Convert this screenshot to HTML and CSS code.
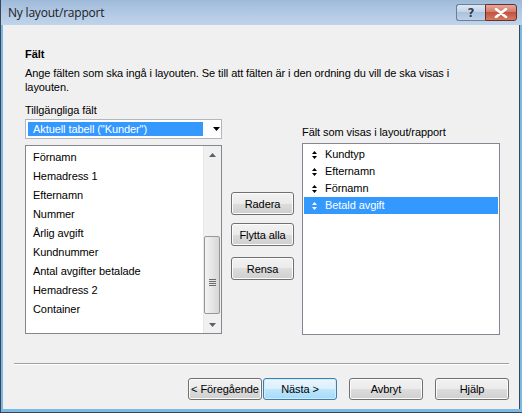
FILE: index.html
```html
<!DOCTYPE html>
<html>
<head>
<meta charset="utf-8">
<link rel="stylesheet" href="styles.css">
</head>
<body>
<div class="window">
  <div class="titlebar">
    <span class="title">Ny layout/rapport</span>
    <div class="caption-btns">
      <div class="cap-btn help">?</div>
      <div class="cap-btn close">
        <svg width="14" height="10" viewBox="0 0 14 10"><path d="M2 1 L12 9 M12 1 L2 9" stroke="#fff" stroke-width="2.6" stroke-linecap="round"/></svg>
      </div>
    </div>
  </div>
  <div class="content">
    <div class="body">
      <div class="heading">Fält</div>
      <div class="desc">Ange fälten som ska ingå i layouten. Se till att fälten är i den ordning du vill de ska visas i<br>layouten.</div>
      <div class="main">
        <div class="col-left">
          <div class="label">Tillgängliga fält</div>
          <div class="combo">
            <div class="combo-sel">Aktuell tabell ("Kunder")</div>
            <svg class="combo-arrow" width="7" height="4" viewBox="0 0 7 4"><path d="M0 0 H7 L3.5 4 Z" fill="#000"/></svg>
          </div>
          <div class="list list-left">
            <div class="items">
              <div class="item">Förnamn</div>
              <div class="item">Hemadress 1</div>
              <div class="item">Efternamn</div>
              <div class="item">Nummer</div>
              <div class="item">Årlig avgift</div>
              <div class="item">Kundnummer</div>
              <div class="item">Antal avgifter betalade</div>
              <div class="item">Hemadress 2</div>
              <div class="item">Container</div>
            </div>
            <div class="scrollbar">
              <div class="sb-arrow"><svg width="7" height="4" viewBox="0 0 7 4"><path d="M0 4 H7 L3.5 0 Z" fill="#606060"/></svg></div>
              <div class="sb-track">
                <div class="sb-thumb">
                  <div class="grip"><i></i><i></i><i></i><i></i></div>
                </div>
              </div>
              <div class="sb-arrow"><svg width="7" height="4" viewBox="0 0 7 4"><path d="M0 0 H7 L3.5 4 Z" fill="#606060"/></svg></div>
            </div>
          </div>
        </div>
        <div class="col-mid">
          <div class="btn b-radera">Radera</div>
          <div class="btn b-flytta">Flytta alla</div>
          <div class="btn b-rensa">Rensa</div>
        </div>
        <div class="col-right">
          <div class="label">Fält som visas i layout/rapport</div>
          <div class="list list-right">
            <div class="ritem"><svg class="updown" width="5" height="8" viewBox="0 0 5 8"><path d="M0 3 H5 L2.5 0 Z M0 5 H5 L2.5 8 Z" fill="currentColor"/></svg>Kundtyp</div>
            <div class="ritem"><svg class="updown" width="5" height="8" viewBox="0 0 5 8"><path d="M0 3 H5 L2.5 0 Z M0 5 H5 L2.5 8 Z" fill="currentColor"/></svg>Efternamn</div>
            <div class="ritem"><svg class="updown" width="5" height="8" viewBox="0 0 5 8"><path d="M0 3 H5 L2.5 0 Z M0 5 H5 L2.5 8 Z" fill="currentColor"/></svg>Förnamn</div>
            <div class="ritem selected"><svg class="updown" width="5" height="8" viewBox="0 0 5 8"><path d="M0 3 H5 L2.5 0 Z M0 5 H5 L2.5 8 Z" fill="currentColor"/></svg>Betald avgift</div>
          </div>
        </div>
      </div>
    </div>
    <div class="separator"></div>
    <div class="footer">
      <div class="btn fbtn">&lt; Föregående</div>
      <div class="btn fbtn default b-next">Nästa &gt;</div>
      <div class="btn fbtn b-gap">Avbryt</div>
      <div class="btn fbtn b-gap">Hjälp</div>
    </div>
  </div>
</div>
</body>
</html>
```

FILE: styles.css
```css
html, body {
  margin: 0;
  padding: 0;
  background: #f0f0f0;
}

.window {
  width: 522px;
  height: 413px;
  box-sizing: border-box;
  border-left: 1px solid #3a4656;
  border-bottom: 1px solid #3a4656;
  background: #79b9e3;
  display: flex;
  flex-direction: column;
  font-family: "Liberation Sans", Arial, sans-serif;
  font-size: 11px;
  letter-spacing: -0.08px;
  color: #000;
}

.titlebar {
  height: 25px;
  flex: none;
  background: linear-gradient(#9fbad9, #b4cbe6 60%, #c0d4ea);
  display: flex;
  align-items: flex-start;
  justify-content: space-between;
}

.title {
  font-family: "Open Sans", "Liberation Sans", sans-serif;
  font-size: 12px;
  line-height: 16px;
  margin: 5px 0 0 7px;
  color: #1b1b1b;
  letter-spacing: -0.2px;
}

.caption-btns {
  display: flex;
  margin: 4px 5px 0 0;
}

.cap-btn {
  height: 15px;
  border: 1px solid #6f7f93;
  border-radius: 3px;
  display: flex;
  align-items: center;
  justify-content: center;
}

.help {
  width: 28px;
  background: linear-gradient(#dde8f4, #c2d4e9 45%, #a9c2de 50%, #bcd2ea);
  color: #2b3a4e;
  font-family: "DejaVu Sans", sans-serif;
  font-weight: bold;
  font-size: 12px;
  text-shadow: 0 0 1px #fff;
  border-right: none;
  border-radius: 3px 0 0 3px;
}

.close {
  width: 30px;
  background: linear-gradient(#e7a89c, #d37a6b 45%, #c3523f 50%, #d57a61);
  border-color: #6b2f2a;
  border-radius: 0 3px 3px 0;
}

.content {
  flex: 1;
  margin: 0 2px 3px 2px;
  background: #f0f0f0;
  border-right: 1px solid #3a4656;
  display: flex;
  flex-direction: column;
}

.body {
  padding: 22px 0 0 22px;
}

.heading {
  font-weight: bold;
  line-height: 14px;
}

.desc {
  margin-top: 5px;
  line-height: 14px;
}

.main {
  margin-top: 9px;
  display: flex;
  align-items: flex-start;
}

.label {
  line-height: 14px;
}

.col-left {
  width: 197px;
  display: flex;
  flex-direction: column;
}

.combo {
  margin-top: 2px;
  height: 20px;
  box-sizing: border-box;
  border: 1px solid #b3b6bd;
  background: #fff;
  display: flex;
  align-items: center;
}

.combo-sel {
  margin-left: 2px;
  width: 175px;
  height: 14px;
  line-height: 14px;
  background: #3399ff;
  color: #fff;
  padding-left: 5px;
  box-sizing: border-box;
}

.combo-arrow {
  margin-left: 10px;
}

.list {
  box-sizing: border-box;
  border: 1px solid #828790;
  background: #fff;
}

.list-left {
  margin-top: 6px;
  height: 189px;
  display: flex;
}

.items {
  flex: 1;
  padding: 2px 0 0 7px;
}

.item {
  height: 19px;
  line-height: 19px;
}

.scrollbar {
  width: 17px;
  display: flex;
  flex-direction: column;
  background: #f0f0f0;
  border-left: 1px solid #e8e8e8;
}

.sb-arrow {
  height: 17px;
  display: flex;
  align-items: center;
  justify-content: center;
  flex: none;
}

.sb-track {
  flex: 1;
  display: flex;
  flex-direction: column;
  justify-content: flex-end;
  padding-bottom: 2px;
}

.sb-thumb {
  height: 78px;
  margin: 0 1px 0 0;
  box-sizing: border-box;
  border: 1px solid #979797;
  border-radius: 2px;
  background: linear-gradient(90deg, #f2f2f2, #e6e6e6 50%, #d6d6d6);
  display: flex;
  align-items: center;
  justify-content: center;
}

.grip {
  display: flex;
  flex-direction: column;
  gap: 1px;
  margin-top: 15px;
}

.grip i {
  display: block;
  width: 7px;
  height: 1px;
  background: #6a6a6a;
}

.col-mid {
  width: 63px;
  margin-left: 9px;
  padding-top: 89px;
  display: flex;
  flex-direction: column;
}

.btn {
  height: 23px;
  box-sizing: border-box;
  border: 1px solid #707070;
  border-radius: 3px;
  background: linear-gradient(#f2f2f2, #ebebeb 50%, #dddddd 50%, #cfcfcf);
  display: flex;
  align-items: center;
  justify-content: center;
  box-shadow: inset 0 0 0 1px #fcfcfc;
  white-space: nowrap;
}

.b-flytta {
  margin-top: 8px;
}

.b-rensa {
  margin-top: 11px;
}

.col-right {
  width: 198px;
  margin-left: 8px;
  padding-top: 22px;
  display: flex;
  flex-direction: column;
}

.list-right {
  margin-top: 4px;
  height: 192px;
  padding: 2px 1px 0 1px;
}

.ritem {
  height: 17px;
  line-height: 17px;
  display: flex;
  align-items: center;
  color: #000;
}

.updown {
  margin: 0 8px 0 8px;
  flex: none;
}

.ritem.selected {
  background: #3399ff;
  color: #fff;
}

.separator {
  margin: 28px 10px 0 11px;
  height: 1px;
  background: #a0a0a0;
  border-bottom: 1px solid #fff;
}

.footer {
  margin-top: 13px;
  padding-right: 10px;
  display: flex;
  justify-content: flex-end;
}

.fbtn {
  width: 74px;
  height: 22px;
}

.b-next {
  margin-left: 1px;
}

.b-gap {
  margin-left: 12px;
}

.default {
  border-color: #3c7fb1;
  background: linear-gradient(#eaf6fd, #d9f0fc 50%, #bee6fd 50%, #a7d9f5);
  box-shadow: inset 0 0 0 1px #d0ecfa;
}
```
